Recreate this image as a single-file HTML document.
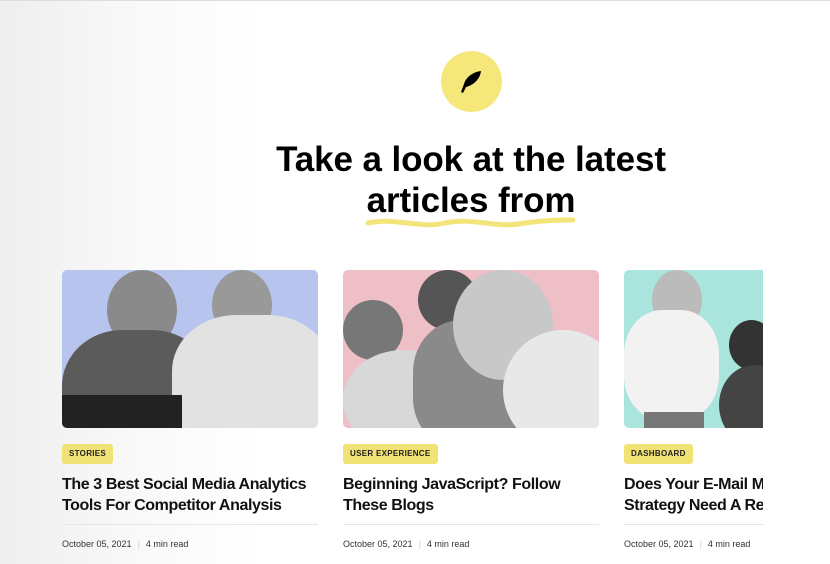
<!DOCTYPE html>
<html><head><style>
*{margin:0;padding:0;box-sizing:border-box}
body{width:830px;height:564px;overflow:hidden;font-family:"Liberation Sans",sans-serif;background:linear-gradient(90deg,#eeeeee 0px,#f8f8f8 120px,#fff 260px);position:relative;border-top:1px solid #ddd}
.logo{position:absolute;left:441px;top:50px;width:61px;height:61px;border-radius:50%;background:#f6e77a}
h1{position:absolute;left:0;width:942px;top:138px;text-align:center;font-size:35px;line-height:41px;font-weight:bold;letter-spacing:-0.1px;color:#000}
.wave{position:absolute;left:365px;top:210px}
.card{position:absolute;top:269px;width:256px}
.img{height:158px;border-radius:5px;position:relative;overflow:hidden}
.tag{position:absolute;top:443px;height:20px;padding:0 7px;background:#f1e276;border-radius:3px;font-size:8px;font-weight:bold;line-height:20px;letter-spacing:.3px;color:#222}
.t{position:absolute;top:473px;font-size:16px;line-height:21px;font-weight:bold;letter-spacing:-.4px;color:#111;white-space:nowrap}
.hr{position:absolute;top:523px;height:1px;background:#e6e6e6;width:256px}
.m{position:absolute;top:538px;font-size:9px;color:#333}
.m span{color:#ccc;margin:0 6px}
.p{position:absolute;background:#7a7a7a;border-radius:50%}
</style></head><body>
<div class="logo"><svg width="61" height="61" viewBox="0 0 61 61"><path d="M20 41 L23 33 C25 26 32 21 40 20 C39 28 33 34 25 36 L22 42 Z" fill="#000"/></svg></div>
<h1>Take a look at the latest<br>articles from</h1>
<svg class="wave" width="212" height="20"><path d="M3 12 C30 6 55 18 80 12 C110 6 130 18 160 12 C180 9 195 9 208 9" stroke="#f4e57a" stroke-width="5" fill="none" stroke-linecap="round"/></svg>
<div class="card" style="left:62px"><div class="img" style="background:#b7c5ee">
<div class="p" style="left:45px;top:0;width:70px;height:80px;background:#8a8a8a"></div>
<div class="p" style="left:0;top:60px;width:150px;height:140px;border-radius:40%;background:#5b5b5b"></div>
<div class="p" style="left:150px;top:0;width:60px;height:70px;background:#999"></div>
<div class="p" style="left:110px;top:45px;width:160px;height:140px;border-radius:40%;background:#e2e2e2"></div>
<div style="position:absolute;left:0;top:125px;width:120px;height:40px;background:#222"></div></div></div>
<div class="card" style="left:343px"><div class="img" style="background:#efbfc7">
<div class="p" style="left:0;top:30px;width:60px;height:60px;background:#777"></div>
<div class="p" style="left:0;top:80px;width:120px;height:100px;background:#d8d8d8"></div>
<div class="p" style="left:75px;top:0;width:60px;height:60px;background:#555"></div>
<div class="p" style="left:70px;top:50px;width:120px;height:130px;border-radius:40%;background:#8a8a8a"></div>
<div class="p" style="left:110px;top:0;width:100px;height:110px;background:#c8c8c8"></div>
<div class="p" style="left:160px;top:60px;width:120px;height:120px;background:#e8e8e8"></div></div></div>
<div class="card" style="left:624px;width:139px"><div class="img" style="background:#a9e5dd;border-radius:5px 0 0 5px">
<div class="p" style="left:28px;top:0;width:50px;height:60px;background:#bbb"></div>
<div class="p" style="left:0;top:40px;width:95px;height:110px;border-radius:40%;background:#f2f2f2"></div>
<div class="p" style="left:105px;top:50px;width:45px;height:50px;background:#333"></div>
<div class="p" style="left:95px;top:95px;width:70px;height:80px;background:#444"></div>
<div style="position:absolute;left:20px;top:142px;width:60px;height:20px;background:#777"></div></div></div>
<div class="tag" style="left:62px">STORIES</div>
<div class="tag" style="left:343px">USER EXPERIENCE</div>
<div class="tag" style="left:624px">DASHBOARD</div>
<div class="t" style="left:62px">The 3 Best Social Media Analytics<br>Tools For Competitor Analysis</div>
<div class="t" style="left:343px">Beginning JavaScript? Follow<br>These Blogs</div>
<div class="t" style="left:624px;width:139px;overflow:hidden">Does Your E-Mail Marketing<br>Strategy Need A Refresh</div>
<div class="hr" style="left:62px"></div><div class="hr" style="left:343px"></div><div class="hr" style="left:624px;width:139px"></div>
<div class="m" style="left:62px">October 05, 2021<span>|</span>4 min read</div>
<div class="m" style="left:343px">October 05, 2021<span>|</span>4 min read</div>
<div class="m" style="left:624px">October 05, 2021<span>|</span>4 min read</div>
</body></html>
